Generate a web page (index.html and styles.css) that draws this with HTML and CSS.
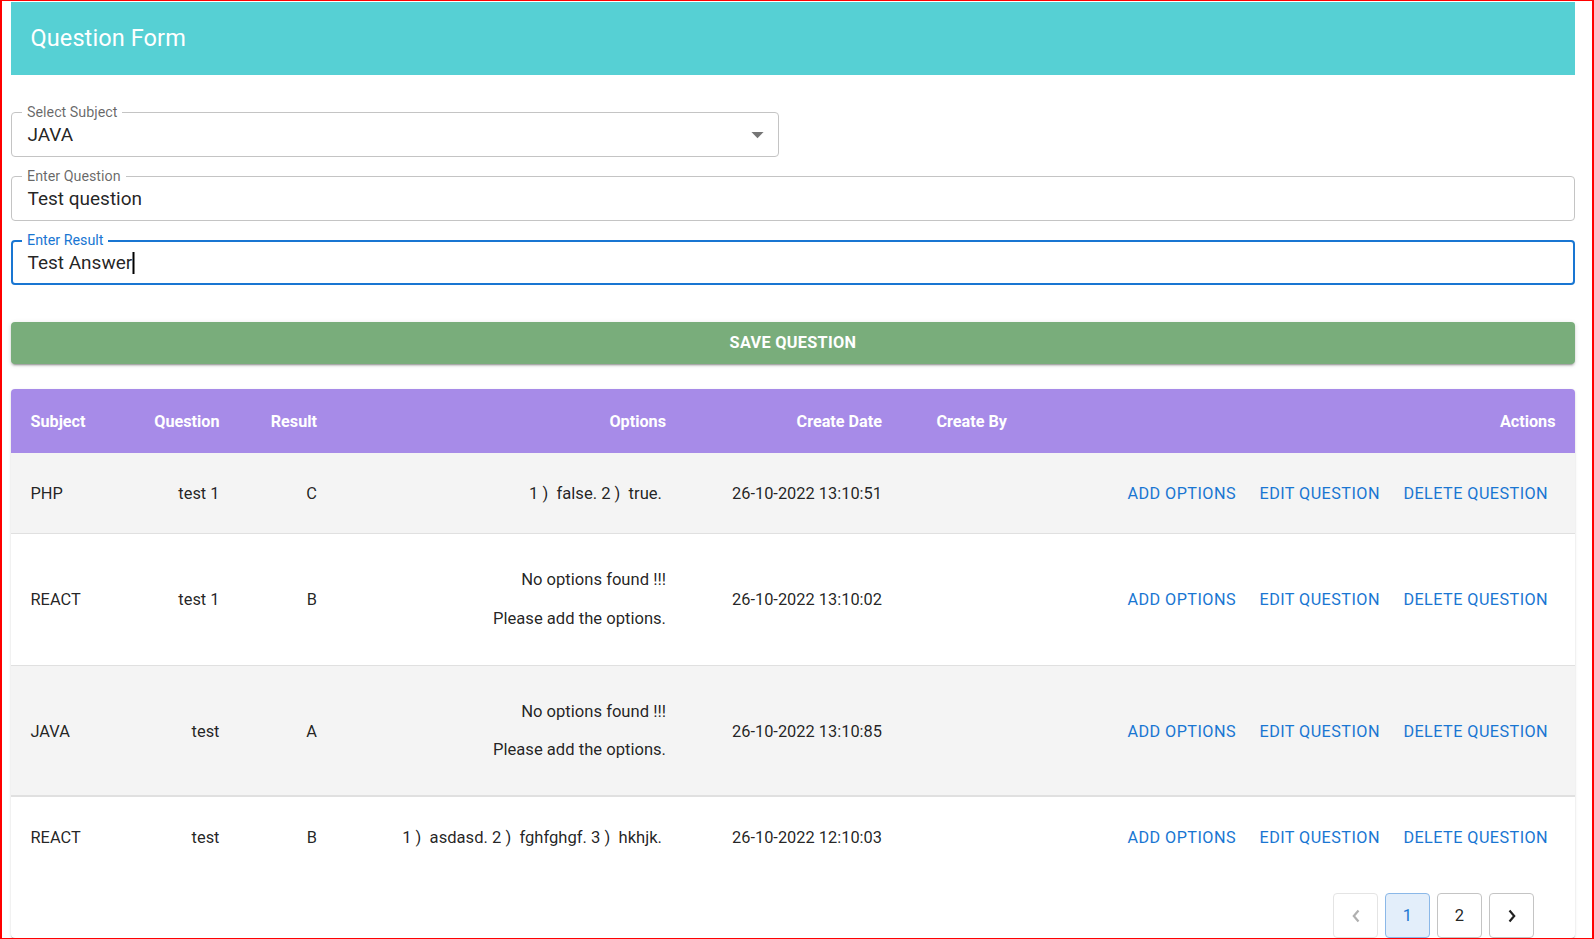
FILE: index.html
```html
<!DOCTYPE html>
<html lang="en">
<head>
<meta charset="utf-8">
<title>Question Form</title>
<link rel="stylesheet" href="styles.css">
</head>
<body>
<div class="frame"></div>
<header class="appbar">
  <h1 class="appbar-title">Question Form</h1>
</header>
<main class="content">
  <div class="field field-select">
    <span class="field-label">Select Subject</span>
    <span class="field-value">JAVA</span>
    <svg class="select-arrow" viewBox="0 0 24 24" width="29" height="29"><path d="M7 10l5 5 5-5z"/></svg>
  </div>
  <div class="field">
    <span class="field-label">Enter Question</span>
    <span class="field-value">Test question</span>
  </div>
  <div class="field field-focused">
    <span class="field-label">Enter Result</span>
    <span class="field-value">Test Answer</span><span class="caret"></span>
  </div>

  <button class="save-btn">SAVE QUESTION</button>

  <section class="table-paper">
    <div class="trow thead">
      <div class="cell">Subject</div>
      <div class="cell right">Question</div>
      <div class="cell right">Result</div>
      <div class="cell right">Options</div>
      <div class="cell right">Create Date</div>
      <div class="cell by">Create By</div>
      <div class="cell right">Actions</div>
    </div>

    <div class="trow striped">
      <div class="cell">PHP</div>
      <div class="cell right">test 1</div>
      <div class="cell right">C</div>
      <div class="cell right opts">1 )&nbsp; false. 2 )&nbsp; true.</div>
      <div class="cell right">26-10-2022 13:10:51</div>
      <div class="cell by"></div>
      <div class="cell right actions"><a class="act">ADD OPTIONS</a><a class="act">EDIT QUESTION</a><a class="act">DELETE QUESTION</a></div>
    </div>

    <div class="trow">
      <div class="cell">REACT</div>
      <div class="cell right">test 1</div>
      <div class="cell right">B</div>
      <div class="cell right multi"><p>No options found !!!</p><p>Please add the options.</p></div>
      <div class="cell right">26-10-2022 13:10:02</div>
      <div class="cell by"></div>
      <div class="cell right actions"><a class="act">ADD OPTIONS</a><a class="act">EDIT QUESTION</a><a class="act">DELETE QUESTION</a></div>
    </div>

    <div class="trow striped thick">
      <div class="cell">JAVA</div>
      <div class="cell right">test</div>
      <div class="cell right">A</div>
      <div class="cell right multi"><p>No options found !!!</p><p>Please add the options.</p></div>
      <div class="cell right">26-10-2022 13:10:85</div>
      <div class="cell by"></div>
      <div class="cell right actions"><a class="act">ADD OPTIONS</a><a class="act">EDIT QUESTION</a><a class="act">DELETE QUESTION</a></div>
    </div>

    <div class="trow last">
      <div class="cell">REACT</div>
      <div class="cell right">test</div>
      <div class="cell right">B</div>
      <div class="cell right opts">1 )&nbsp; asdasd. 2 )&nbsp; fghfghgf. 3 )&nbsp; hkhjk.</div>
      <div class="cell right">26-10-2022 12:10:03</div>
      <div class="cell by"></div>
      <div class="cell right actions"><a class="act">ADD OPTIONS</a><a class="act">EDIT QUESTION</a><a class="act">DELETE QUESTION</a></div>
    </div>

    <nav class="pagination">
      <button class="page-btn disabled" aria-label="previous">
        <svg viewBox="0 0 8 14" width="8" height="14"><polyline points="6.5,1.5 1.8,7 6.5,12.5"/></svg>
      </button>
      <button class="page-btn selected">1</button>
      <button class="page-btn">2</button>
      <button class="page-btn" aria-label="next">
        <svg viewBox="0 0 8 14" width="8" height="14"><polyline points="1.5,1.5 6.2,7 1.5,12.5"/></svg>
      </button>
    </nav>
  </section>
</main>
</body>
</html>
```

FILE: styles.css
```css
* { box-sizing: border-box; }

html, body {
  margin: 0;
  background: #ffffff;
}

body {
  padding: 2px 19px 0 11px;
  font-family: Roboto, "Liberation Sans", Arial, sans-serif;
  color: rgba(0, 0, 0, 0.87);
  overflow: hidden;
}

.frame {
  position: fixed;
  inset: 0;
  border-style: solid;
  border-color: #ff0000;
  border-width: 1px 2px 1px 2px;
  pointer-events: none;
  z-index: 10;
}

/* App bar */
.appbar {
  height: 73px;
  background: #56d0d4;
  display: flex;
  align-items: center;
  padding-left: 19.5px;
  padding-bottom: 1px;
}

.appbar-title {
  margin: 0;
  font-size: 23.5px;
  font-weight: 400;
  color: #ffffff;
  letter-spacing: 0.1px;
}

.content {
  display: flex;
  flex-direction: column;
  padding-top: 37px;
}

/* Outlined text fields */
.field {
  position: relative;
  height: 45px;
  border: 1px solid #c4c4c4;
  border-radius: 4px;
  display: flex;
  align-items: center;
  padding: 0 16px 0 15.5px;
}

.field + .field { margin-top: 19px; }

.field-select {
  width: 768px;
  padding-right: 6px;
}

.field-label {
  position: absolute;
  top: -9px;
  left: 10px;
  padding: 0 5px;
  background: #ffffff;
  font-size: 14.3px;
  line-height: 16px;
  color: rgba(0, 0, 0, 0.6);
}

.field-value {
  font-size: 19px;
  line-height: 24px;
  color: rgba(0, 0, 0, 0.87);
}

.select-arrow {
  margin-left: auto;
  fill: rgba(0, 0, 0, 0.54);
}

.field-focused {
  border: 2px solid #1976d2;
  padding-left: 14.5px;
}

.field-focused .field-label {
  color: #1976d2;
  top: -10px;
  left: 9px;
}

.caret {
  display: inline-block;
  width: 1.5px;
  height: 22px;
  background: #000000;
  transform: translateX(0.5px);
}

/* Save button */
.save-btn {
  margin-top: 36.5px;
  height: 42px;
  border: 0;
  border-radius: 4px;
  background: #79ad7b;
  color: #ffffff;
  font-family: inherit;
  font-size: 16.3px;
  font-weight: 700;
  letter-spacing: 0.3px;
  box-shadow: 0 3px 1px -2px rgba(0,0,0,0.2), 0 2px 2px 0 rgba(0,0,0,0.14), 0 1px 5px 0 rgba(0,0,0,0.12);
}

/* Table */
.table-paper {
  margin-top: 25px;
  border-radius: 4px;
  background: #ffffff;
  box-shadow: 0 2px 1px -1px rgba(0,0,0,0.2), 0 1px 1px 0 rgba(0,0,0,0.14), 0 1px 3px 0 rgba(0,0,0,0.12);
}

.trow {
  display: grid;
  grid-template-columns: 109px 119px 97.5px 349px 216px 198.5px 1fr;
  align-items: center;
  border-bottom: 1px solid #e0e0e0;
  font-size: 16.4px;
  line-height: 26px;
}

.trow.last { border-bottom: 0; }
.trow.thick { border-bottom: 2px solid #e0e0e0; }

.thead {
  height: 64px;
  background: #a78be8;
  border-radius: 4px 4px 0 0;
  border-bottom: 0;
  color: #ffffff;
  font-weight: 700;
  font-size: 16.2px;
}

.striped { background: #f4f4f4; }

.cell {
  padding: 28px 19.5px 26px;
  white-space: nowrap;
}

.thead .cell { padding-top: 2px; padding-bottom: 0; }

.cell.right { text-align: right; }

.cell.by { padding-left: 35px; }

.cell.opts {
  padding-right: 23.5px;
  font-size: 16.6px;
}

.cell.multi {
  padding-top: 33.5px;
  padding-bottom: 33.5px;
  display: flex;
  flex-direction: column;
  align-items: flex-end;
  gap: 12.6px;
  font-size: 16.6px;
}

.thick .cell.multi {
  padding-top: 32.5px;
  padding-bottom: 32px;
}

.cell.multi p { margin: 0; }

.actions {
  display: flex;
  justify-content: flex-end;
  gap: 7.5px;
  padding-top: 25px;
  padding-bottom: 23px;
}

.act {
  padding: 3px 8px;
  color: #1976d2;
  font-size: 16.2px;
  font-weight: 400;
  letter-spacing: 0.45px;
  text-transform: uppercase;
}

/* Pagination */
.pagination {
  display: flex;
  justify-content: flex-end;
  gap: 7px;
  padding: 16px 41px 0 0;
}

.page-btn {
  width: 45px;
  height: 45px;
  border: 1px solid #c4c4c4;
  border-radius: 4px;
  background: #ffffff;
  font-family: inherit;
  font-size: 16.5px;
  color: rgba(0, 0, 0, 0.87);
  display: flex;
  align-items: center;
  justify-content: center;
  padding: 0;
}

.page-btn svg {
  fill: none;
  stroke: #212121;
  stroke-width: 2.2;
  stroke-linecap: butt;
  stroke-linejoin: miter;
}

.page-btn.disabled {
  border-color: #e4e4e4;
}

.page-btn.disabled svg { stroke: #b0b0b0; }

.page-btn.selected {
  background: #e3eefa;
  border-color: #8bb8e8;
  color: #1976d2;
}
```
